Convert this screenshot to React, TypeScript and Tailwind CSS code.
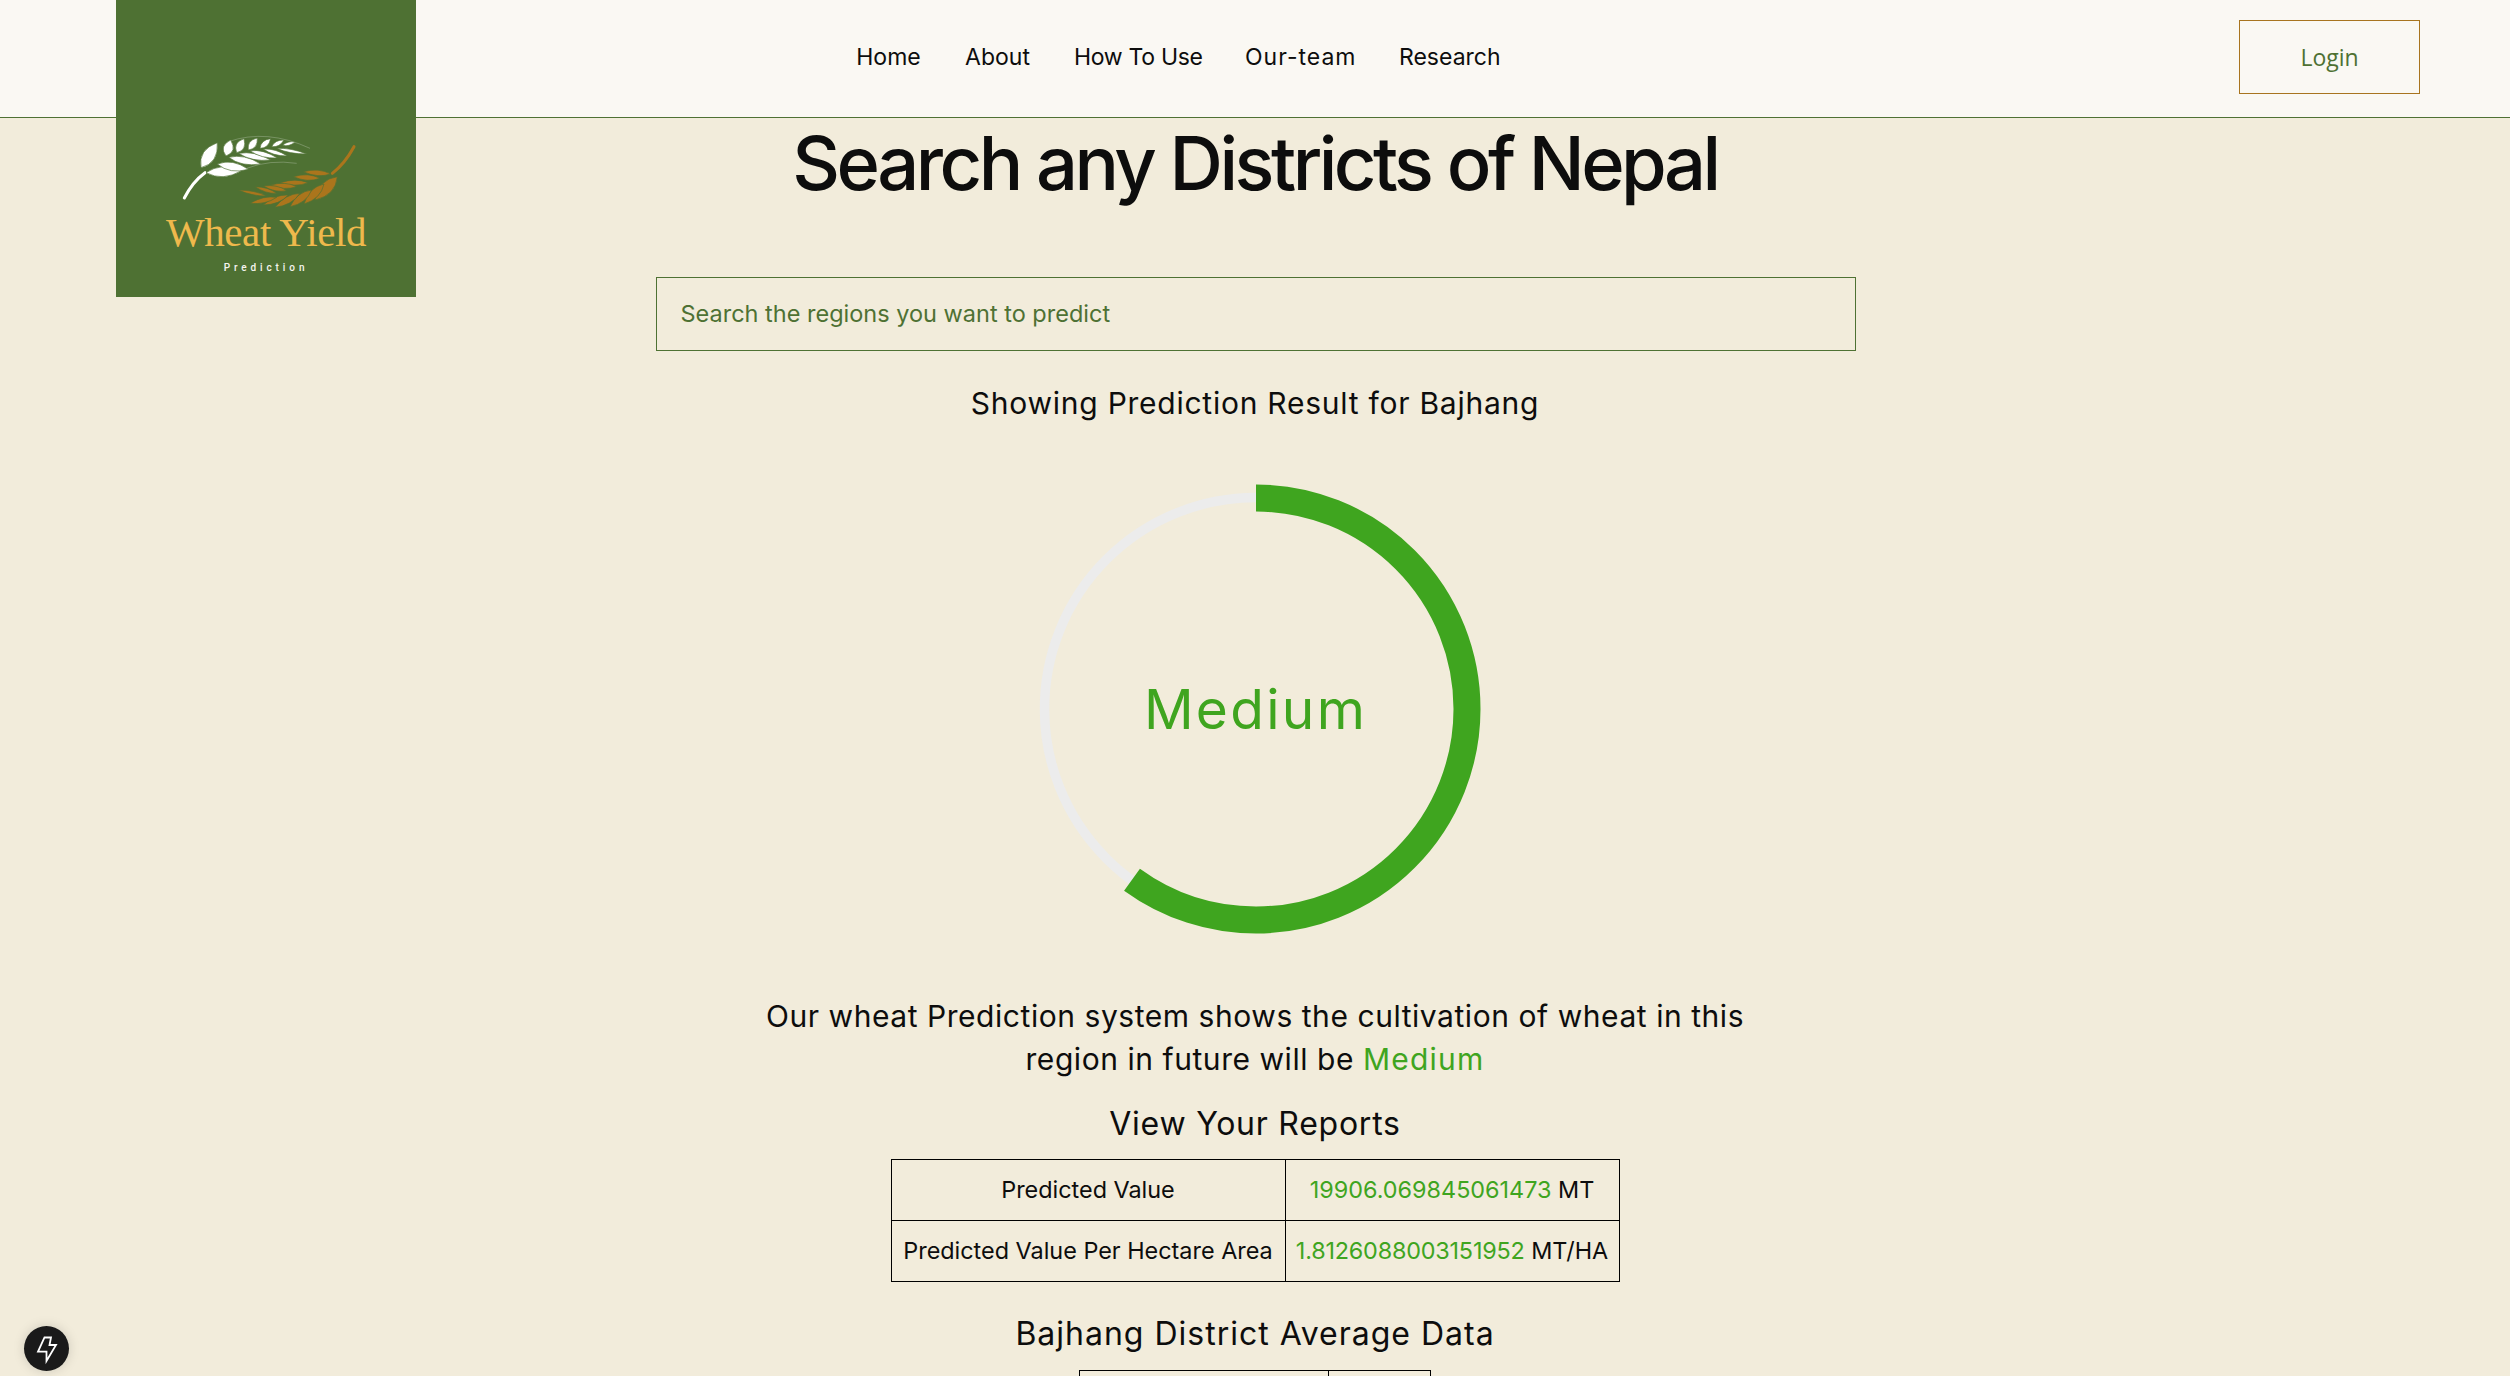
const MONT = "font-['Inter',sans-serif]";
const DM = "font-['Inter',sans-serif]";

const navItems = [
  { label: 'Home', className: 'w-[65px]' },
  { label: 'About', className: 'w-[67px]' },
  { label: 'How To Use', className: 'w-[128px] tracking-[-0.3px]' },
  { label: 'Our-team', className: 'w-[111px] tracking-[1px]' },
  { label: 'Research', className: 'w-[101px]' },
];

// grains are [baseX, baseY, tipX, tipY, halfWidth], in the logo box's 900x891 units
type Grain = [number, number, number, number, number];

const whiteGrains: Grain[] = [
  [303, 503, 352, 428, 30],
  [378, 468, 392, 420, 24],
  [410, 458, 432, 416, 20],
  [445, 450, 472, 414, 17],
  [480, 445, 512, 416, 14],
  [515, 440, 552, 420, 11],
  [548, 436, 585, 426, 8],
  [318, 518, 425, 512, 24],
  [352, 492, 445, 508, 20],
  [386, 472, 482, 492, 17],
  [416, 460, 512, 480, 14],
  [450, 452, 532, 474, 12],
  [490, 447, 562, 468, 10],
  [530, 445, 620, 462, 8],
];

const brownGrains: Grain[] = [
  [712, 530, 645, 600, 28],
  [672, 552, 612, 612, 20],
  [635, 570, 570, 620, 18],
  [600, 580, 525, 622, 16],
  [565, 585, 490, 615, 14],
  [530, 592, 450, 610, 12],
  [692, 522, 610, 515, 13],
  [660, 535, 580, 530, 13],
  [625, 548, 540, 548, 12],
  [590, 560, 512, 555, 12],
  [560, 572, 490, 558, 11],
  [530, 580, 465, 560, 9],
  [500, 588, 415, 570, 8],
];

function grainPath([x1, y1, x2, y2, w]: Grain) {
  const dx = x2 - x1;
  const dy = y2 - y1;
  const len = Math.hypot(dx, dy);
  const nx = (-dy / len) * w * 1.25;
  const ny = (dx / len) * w * 1.25;
  const mx = x1 + dx * 0.45;
  const my = y1 + dy * 0.45;
  return `M${x1} ${y1}Q${mx + nx} ${my + ny} ${x2} ${y2}Q${mx - nx} ${my - ny} ${x1} ${y1}Z`;
}

function Logo() {
  return (
    <div className="absolute left-[116px] top-0 z-10 h-[297px] w-[300px] bg-[#4e7133]">
      <svg viewBox="48 0 900 891" className="absolute inset-0 h-full w-full">
        <path d="M253 594Q278 545 315 518" fill="none" stroke="#fff" strokeWidth="9" strokeLinecap="round" />
        {whiteGrains.map((g, i) => (
          <path key={i} d={grainPath(g)} fill="#fff" stroke="#4e7133" strokeWidth="2" />
        ))}
        <path d="M385 425Q500 385 630 445M440 505Q510 478 590 490" fill="none" stroke="#fff" strokeOpacity="0.35" strokeWidth="2" />
        <path d="M697 520Q735 490 762 440" fill="none" stroke="#ab751c" strokeWidth="9" strokeLinecap="round" />
        {brownGrains.map((g, i) => (
          <path key={i} d={grainPath(g)} fill="#ab751c" stroke="#4e7133" strokeWidth="2" />
        ))}
      </svg>
      <div className="absolute left-0 right-0 top-[206px] whitespace-nowrap text-center font-['Liberation_Serif',serif] text-[41px] leading-[52px] tracking-[-0.4px] text-[#efb94c]">
        Wheat Yield
      </div>
      <div className="absolute left-0 right-0 top-[260px] text-center font-['Roboto',sans-serif] text-[10px] font-medium leading-[16px] tracking-[3.9px] text-[#f5f5f0]">
        Prediction
      </div>
    </div>
  );
}

function ProgressRing() {
  return (
    <div className="relative ml-[1px] mt-[62px] h-[450px] w-[450px]">
      <svg viewBox="0 0 450 450" className="h-full w-full">
        <circle cx="225" cy="225" r="211.5" fill="none" stroke="#ececec" strokeWidth="9.5" />
        <circle
          cx="225"
          cy="225"
          r="211"
          fill="none"
          stroke="#3fa51f"
          strokeWidth="27"
          pathLength="100"
          strokeDasharray="60 100"
          transform="rotate(-90 225 225)"
        />
      </svg>
      <div className={`absolute inset-0 flex items-center justify-center text-[55px] tracking-[2.3px] text-[#3fa51f] ${MONT}`}>
        Medium
      </div>
    </div>
  );
}

export default function App() {
  return (
    <div className="relative h-screen overflow-hidden bg-[#f2ecdb] text-[#0d0d0d]">
      <header className="flex h-[118px] items-center border-b border-[#4e7133] bg-[#faf8f3]">
        <nav className={`mb-[2px] ml-[856px] flex gap-[43px] text-[23px] ${DM}`}>
          {navItems.map((item) => (
            <a key={item.label} className={`whitespace-nowrap text-center ${item.className}`}>
              {item.label}
            </a>
          ))}
        </nav>
        <button className="mb-[3px] ml-auto mr-[90px] h-[74px] w-[181px] border border-[#a8741f] font-['Open_Sans',sans-serif] text-[23px] text-[#4e7133]">
          Login
        </button>
      </header>
      <Logo />

      <main className="flex flex-col items-center">
        <h1 className={`whitespace-nowrap text-[74px] font-medium leading-[90px] tracking-[-3.5px] ${MONT}`}>
          Search any Districts of Nepal
        </h1>
        <div className={`ml-[1px] mt-[69px] flex h-[74px] w-[1200px] items-center border border-[#4e7133] px-[24px] text-[23.5px] text-[#4e7133] ${DM}`}>
          Search the regions you want to predict
        </div>
        <p className={`mt-[33px] text-[30px] leading-[38px] tracking-[0.75px] ${MONT}`}>Showing Prediction Result for Bajhang</p>
        <ProgressRing />
        <p className={`mt-[61px] w-[1000px] text-center text-[30px] leading-[43px] tracking-[0.55px] ${MONT}`}>
          Our wheat Prediction system shows the cultivation of wheat in this region in future will be{' '}
          <span className="tracking-[1.2px] text-[#3fa51f]">Medium</span>
        </p>
        <h2 className={`mt-[22px] text-[32px] leading-[42px] tracking-[0.75px] ${MONT}`}>View Your Reports</h2>
        <table className={`mt-[14px] w-[729px] table-fixed border-collapse border border-black text-[23.4px] ${DM}`}>
          <tbody>
            <tr className="h-[61px]">
              <td className="w-[394px] border border-black text-center">Predicted Value</td>
              <td className="border border-black text-center">
                <span className="text-[#3fa51f]">19906.069845061473</span> MT
              </td>
            </tr>
            <tr className="h-[61px]">
              <td className="border border-black text-center whitespace-nowrap">Predicted Value Per Hectare Area</td>
              <td className="border border-black text-center whitespace-nowrap">
                <span className="tracking-[-0.2px] text-[#3fa51f]">1.8126088003151952</span> MT/HA
              </td>
            </tr>
          </tbody>
        </table>
        <h2 className={`mt-[31px] text-[32px] leading-[42px] tracking-[1px] ${MONT}`}>Bajhang District Average Data</h2>
        <table className="mt-[15px] w-[352px] table-fixed border-collapse border border-black">
          <tbody>
            <tr className="h-[61px]">
              <td className="w-[249px] border border-black" />
              <td className="border border-black" />
            </tr>
          </tbody>
        </table>
      </main>

      <button className="absolute bottom-[5px] left-[24px] h-[45px] w-[45px] rounded-full bg-[#1a1a1a] shadow-[0_0_12px_rgba(0,0,0,0.15)]">
        <svg viewBox="0 0 45 45" className="h-full w-full" fill="none" stroke="#fff" strokeWidth="1.8">
          <path d="M20.5 11.5H27L25.5 19H32L22.5 35V25.7H14Z" />
        </svg>
      </button>
    </div>
  );
}
